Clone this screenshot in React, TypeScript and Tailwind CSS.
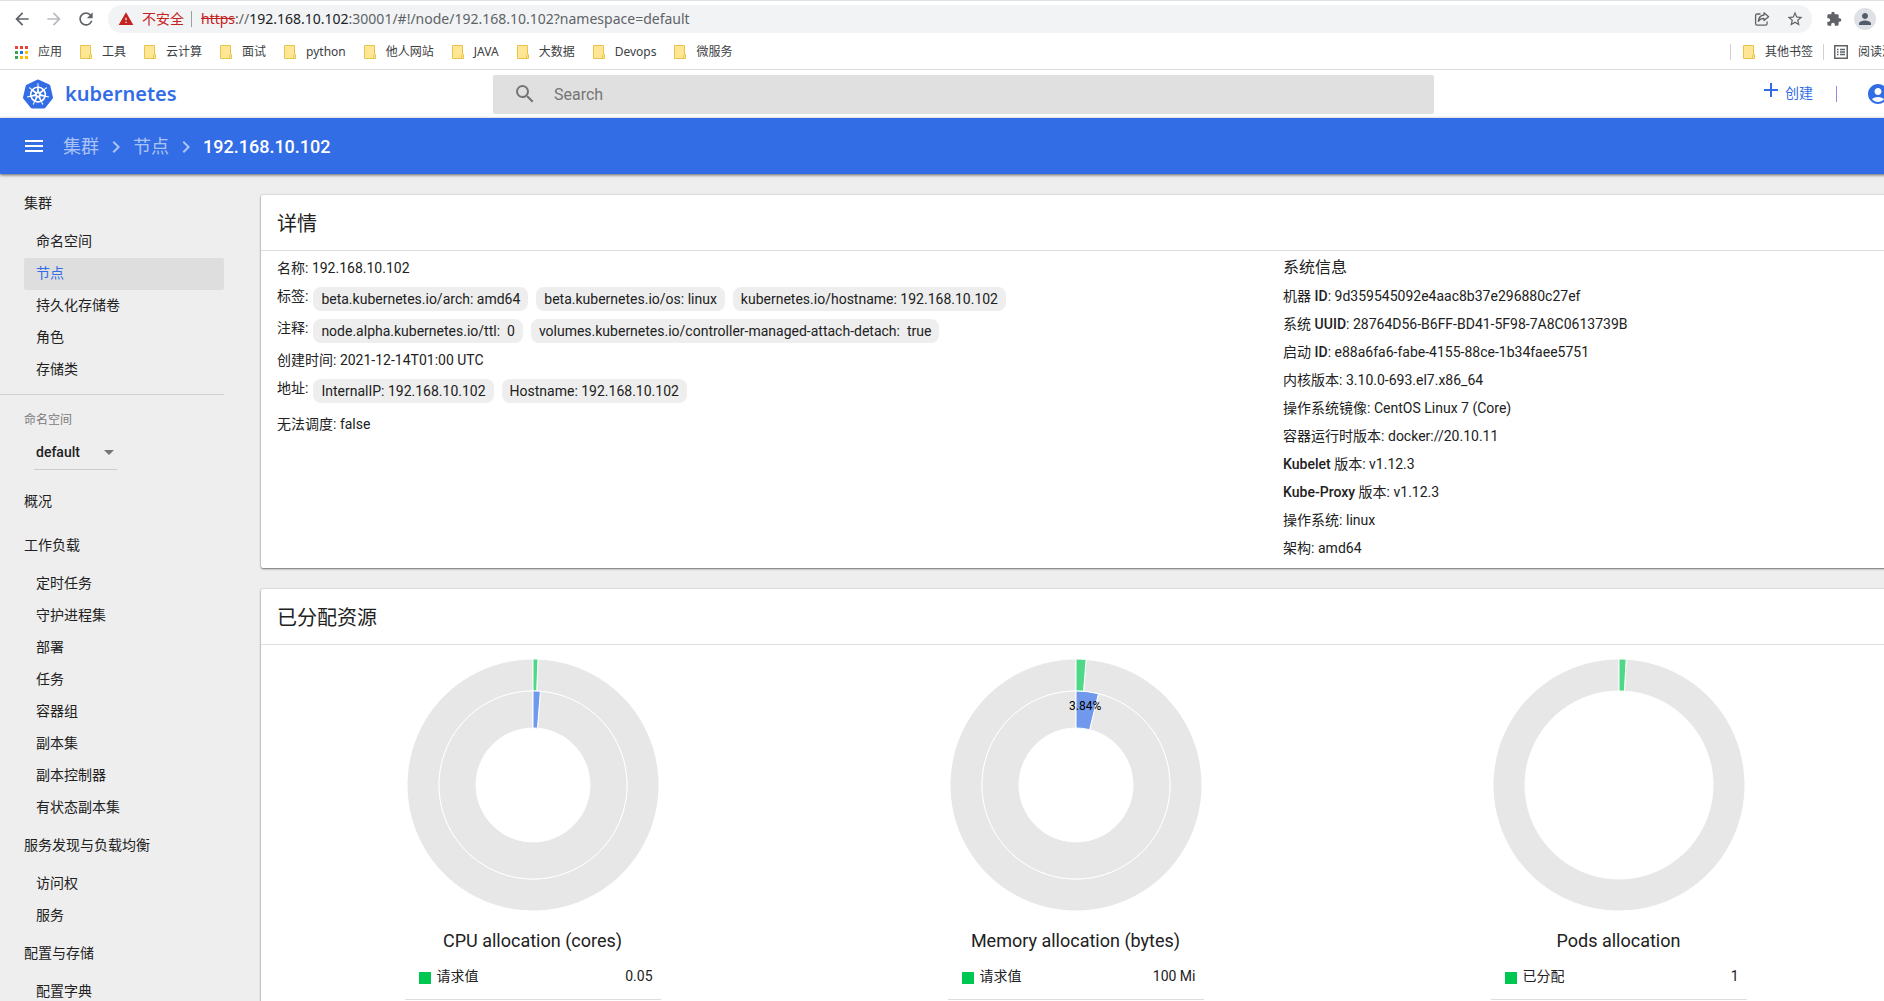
import { ReactNode, useState } from 'react';
import {
  MdAccountCircle,
  MdAdd,
  MdArrowBack,
  MdArrowDropDown,
  MdArrowForward,
  MdChevronRight,
  MdExtension,
  MdMenu,
  MdPerson,
  MdRefresh,
  MdSearch,
  MdStarBorder,
  MdWarning,
} from 'react-icons/md';
import { SiKubernetes } from 'react-icons/si';

interface NavSection {
  title: string;
  items: string[];
}

interface Slice {
  percent: number;
  color: string;
  outer: number;
  inner: number;
  label?: string;
}

interface Allocation {
  title: string;
  legend: string;
  value: string;
  slices: Slice[];
}

const BOOKMARKS = ['工具', '云计算', '面试', 'python', '他人网站', 'JAVA', '大数据', 'Devops', '微服务'];

const APP_DOTS = [
  '#ea4335', '#ea4335', '#ea4335',
  '#34a853', '#1a73e8', '#fbbc04',
  '#34a853', '#fbbc04', '#fbbc04',
];

const CLUSTER: NavSection = { title: '集群', items: ['命名空间', '节点', '持久化存储卷', '角色', '存储类'] };

const SECTIONS: NavSection[] = [
  { title: '概况', items: [] },
  { title: '工作负载', items: ['定时任务', '守护进程集', '部署', '任务', '容器组', '副本集', '副本控制器', '有状态副本集'] },
  { title: '服务发现与负载均衡', items: ['访问权', '服务'] },
  { title: '配置与存储', items: ['配置字典'] },
];

const SYSTEM_INFO = [
  ['机器 ID', '9d359545092e4aac8b37e296880c27ef'],
  ['系统 UUID', '28764D56-B6FF-BD41-5F98-7A8C0613739B'],
  ['启动 ID', 'e88a6fa6-fabe-4155-88ce-1b34faee5751'],
  ['内核版本', '3.10.0-693.el7.x86_64'],
  ['操作系统镜像', 'CentOS Linux 7 (Core)'],
  ['容器运行时版本', 'docker://20.10.11'],
  ['Kubelet 版本', 'v1.12.3'],
  ['Kube-Proxy 版本', 'v1.12.3'],
  ['操作系统', 'linux'],
  ['架构', 'amd64'],
];

const GREEN = '#4dd987';
const BLUE = '#7099ed';

const ALLOCATIONS: Allocation[] = [
  {
    title: 'CPU allocation (cores)',
    legend: '请求值',
    value: '0.05',
    slices: [
      { percent: 0.63, color: GREEN, outer: 126, inner: 94 },
      { percent: 1.25, color: BLUE, outer: 94, inner: 57 },
    ],
  },
  {
    title: 'Memory allocation (bytes)',
    legend: '请求值',
    value: '100 Mi',
    slices: [
      { percent: 1.28, color: GREEN, outer: 126, inner: 94 },
      { percent: 3.84, color: BLUE, outer: 94, inner: 57, label: '3.84%' },
    ],
  },
  {
    title: 'Pods allocation',
    legend: '已分配',
    value: '1',
    slices: [{ percent: 0.91, color: GREEN, outer: 126, inner: 94 }],
  },
];

function polar(radius: number, percent: number) {
  const angle = (percent / 100) * Math.PI * 2;
  return [radius * Math.sin(angle), -radius * Math.cos(angle)];
}

// Ring segment running clockwise between two percentages, 0 is at the top
function arc(outer: number, inner: number, from: number, to: number) {
  const [x1, y1] = polar(outer, from);
  const [x2, y2] = polar(outer, to);
  const [x3, y3] = polar(inner, to);
  const [x4, y4] = polar(inner, from);
  const large = to - from > 50 ? 1 : 0;
  return `M${x1},${y1}A${outer},${outer} 0 ${large} 1 ${x2},${y2}L${x3},${y3}A${inner},${inner} 0 ${large} 0 ${x4},${y4}Z`;
}

function labelPoint(slice: Slice) {
  return polar((slice.outer + slice.inner) / 2, slice.percent / 2);
}

function Donut({ slices }: { slices: Slice[] }) {
  return (
    <svg viewBox="-128 -128 256 256" className="block w-64 h-64" role="img">
      {slices.map((s) => (
        <g key={s.outer} stroke="#fff" strokeWidth="1">
          <path d={arc(s.outer, s.inner, s.percent, 100)} fill="#e7e7e7" />
          <path d={arc(s.outer, s.inner, 0, s.percent)} fill={s.color} />
        </g>
      ))}
      {slices.filter((s) => s.label).map((s) => (
        <text key={s.label} x={labelPoint(s)[0]} y={labelPoint(s)[1]} textAnchor="middle" className="text-[12px] fill-black">
          {s.label}
        </text>
      ))}
    </svg>
  );
}

function FolderIcon() {
  return (
    <svg viewBox="0 0 12 14" className="w-3 h-3.5 shrink-0">
      <path d="M.5.5h10v9h1v4H.5z" fill="#ffe694" stroke="#e8c54a" />
      <path d="M9.5 13.5v-3l1-1" fill="none" stroke="#e8c54a" />
    </svg>
  );
}

function ShareIcon() {
  return (
    <svg viewBox="0 0 16 16" className="w-4 h-4" fill="none" stroke="#5f6368" strokeWidth="1.3" strokeLinejoin="round">
      <path d="M6.5 3H3.2C2.2 3 1.6 3.6 1.6 4.6v8c0 1 .6 1.6 1.6 1.6h8.3c1 0 1.6-.6 1.6-1.6v-2" />
      <path d="M10 1.8l4.6 3.9L10 9.6V7.4C7.4 7.4 5.5 8.3 4.3 10.3 4.6 6.8 6.6 4.4 10 4z" />
    </svg>
  );
}

function ReadingListIcon() {
  return (
    <svg viewBox="0 0 14 14" className="w-3.5 h-3.5 shrink-0">
      <rect x=".75" y=".75" width="12.5" height="12.5" fill="none" stroke="#5f6368" strokeWidth="1.5" />
      <path d="M3 4.5h1.5M3 7h1.5M3 9.5h1.5M6 4.5h5M6 7h5M6 9.5h5" stroke="#5f6368" strokeWidth="1.4" />
    </svg>
  );
}

function BrowserChrome() {
  return (
    <div className="-mr-6 bg-white border-t border-[#dee1e6] border-b border-b-[#dadce0] font-['Noto_Sans','Noto_Sans_CJK_SC',sans-serif] text-[#3c4043]">
      <div className="flex items-center h-9 pl-3 pr-8 text-[#5f6368]">
        <button aria-label="后退" className="mr-3"><MdArrowBack className="w-5 h-5" /></button>
        <button aria-label="前进" className="mr-3 text-[#b9bbbe]"><MdArrowForward className="w-5 h-5" /></button>
        <button aria-label="刷新"><MdRefresh className="w-5 h-5" /></button>
        <div className="flex items-center flex-1 h-7 ml-3 pl-2.5 pr-2 rounded-full bg-[#f1f3f4]">
          <MdWarning className="w-4 h-4 text-[#c5221f]" />
          <span className="ml-2 text-sm leading-5 text-[#c5221f]">不安全</span>
          <span className="w-px h-4 ml-[7px] mr-[9px] bg-[#9aa0a6]" />
          <span className="text-sm leading-5">
            <span className="text-[#c5221f] line-through">https</span>://
            <span className="text-[#202124]">192.168.10.102</span>:30001/#!/node/192.168.10.102?namespace=default
          </span>
          <button aria-label="分享" className="ml-auto"><ShareIcon /></button>
          <button aria-label="收藏" className="ml-4"><MdStarBorder className="w-[18px] h-[18px]" /></button>
        </div>
        <button aria-label="扩展程序" className="ml-3.5"><MdExtension className="w-4 h-4" /></button>
        <button aria-label="用户" className="ml-3 w-[22px] h-[22px] rounded-full bg-[#dee1e6] flex items-center justify-center">
          <MdPerson className="w-[18px] h-[18px] text-[#525c6b]" />
        </button>
      </div>
      <div className="flex items-center h-8 pb-0.5 pl-[15px] pr-0.5 text-xs whitespace-nowrap">
        <a href="#apps" className="flex items-center gap-2.5 mr-[18px]">
          <span className="grid grid-cols-3 gap-0.5">
            {APP_DOTS.map((color, i) => (
              <span key={i} className="w-[3px] h-[3px]" style={{ backgroundColor: color }} />
            ))}
          </span>
          应用
        </a>
        {BOOKMARKS.map((name) => (
          <a key={name} href="#bookmark" className="flex items-center gap-2.5 mr-[18px]">
            <FolderIcon />
            {name}
          </a>
        ))}
        <div className="flex items-center ml-auto">
          <span className="w-px h-4 mr-3 bg-[#cfd1d4]" />
          <a href="#other" className="flex items-center gap-2.5"><FolderIcon />其他书签</a>
          <span className="w-px h-4 mx-2.5 bg-[#cfd1d4]" />
          <a href="#reading" className="flex items-center gap-2.5"><ReadingListIcon />阅读清单</a>
        </div>
      </div>
    </div>
  );
}

function AppHeader() {
  return (
    <header className="grid grid-cols-[493fr_941fr_470fr] items-center h-12 bg-white">
      <a href="#home" className="flex items-center gap-3 pl-[23px] text-[#326de6]">
        <SiKubernetes className="w-[30px] h-[30px]" />
        <span className="text-xl leading-6 font-semibold font-['Noto_Sans',sans-serif]">kubernetes</span>
      </a>
      <label className="flex items-center h-[39px] pl-5 bg-[#e0e0e0] rounded-xs text-[#757575]">
        <MdSearch className="w-6 h-6" />
        <input
          type="text"
          aria-label="Search"
          placeholder="Search"
          className="flex-1 ml-[17px] pt-0.5 bg-transparent text-base outline-none placeholder:text-[#757575]"
        />
      </label>
      <div className="flex items-center justify-end pr-3.5 text-[#326de6]">
        <button className="flex items-center gap-0.5 text-sm">
          <MdAdd className="w-6 h-6 mb-2" />
          <span className="pb-0.5">创建</span>
        </button>
        <span className="w-px h-4 ml-[23px] mr-[29px] bg-[#8f8bea]" />
        <button aria-label="账户"><MdAccountCircle className="w-6 h-6" /></button>
      </div>
    </header>
  );
}

function Breadcrumbs() {
  return (
    <div className="relative z-10 flex items-center h-14 pl-[22px] bg-[#326de6] text-lg text-white shadow-[0_1px_3px_rgba(0,0,0,0.6)]">
      <button aria-label="菜单"><MdMenu className="w-6 h-6" /></button>
      <nav className="flex items-center gap-[5px] ml-[17px] pt-0.5 text-white/60">
        <a href="#cluster">集群</a>
        <MdChevronRight className="w-6 h-6" />
        <a href="#nodes">节点</a>
        <MdChevronRight className="w-6 h-6" />
        <span className="font-medium text-white">192.168.10.102</span>
      </nav>
    </div>
  );
}

function NavGroup({ section, active, onSelect }: { section: NavSection; active: string; onSelect: (name: string) => void }) {
  return (
    <div>
      <a href="#section" className="flex items-center h-11 pb-0.5 pl-6">{section.title}</a>
      {section.items.map((item) => (
        <a
          key={item}
          href="#item"
          onClick={() => onSelect(item)}
          className={
            item === active
              ? 'flex items-center h-8 pb-0.5 ml-6 pl-3 rounded-xs bg-[#dedede] text-[#326de6]'
              : 'flex items-center h-8 pb-0.5 ml-6 pl-3'
          }
        >
          {item}
        </a>
      ))}
    </div>
  );
}

function Sidebar() {
  const [active, setActive] = useState('节点');

  return (
    <aside className="w-56 shrink-0 pt-2 text-sm">
      <NavGroup section={CLUSTER} active={active} onSelect={setActive} />
      <div className="mt-2 pt-[15px] pb-2.5 border-t border-[#cfcfcf]">
        <label htmlFor="namespace" className="block pl-6 text-xs leading-5 text-[#7a7a7a]">命名空间</label>
        <div className="relative w-[83px] mt-1 ml-[34px] border-b border-[#cccccc]">
          <select id="namespace" className="appearance-none w-full h-[35px] pl-0.5 font-medium bg-transparent outline-none">
            <option>default</option>
          </select>
          <MdArrowDropDown className="absolute -right-1 top-1.5 w-6 h-6 text-[#757575] pointer-events-none" />
        </div>
      </div>
      {SECTIONS.map((s) => (
        <NavGroup key={s.title} section={s} active={active} onSelect={setActive} />
      ))}
    </aside>
  );
}

function Card({ title, children }: { title: string; children: ReactNode }) {
  return (
    <section className="bg-white rounded-xs shadow-[0_1px_2px_rgba(0,0,0,0.5),0_0_2px_rgba(0,0,0,0.2)]">
      <h2 className="flex items-center h-14 pt-0.5 pl-4 text-xl border-b border-[#dddddd]">{title}</h2>
      {children}
    </section>
  );
}

function Field({ label, children }: { label: string; children: ReactNode }) {
  // Latin words in a label are set in medium, the Chinese part stays regular
  const parts = label.split(/([A-Za-z-]+)/);
  return (
    <div className="leading-7">
      <dt className="inline">
        {parts.map((part, i) => (i % 2 ? <span key={i} className="font-medium">{part}</span> : part))}:{' '}
      </dt>
      <dd className="inline">{children}</dd>
    </div>
  );
}

function ChipField({ label, chips }: { label: string; chips: string[] }) {
  return (
    <div className="flex gap-[5px] h-8">
      <dt className="leading-7">{label}:</dt>
      <dd className="flex gap-2 pt-[5px]">
        {chips.map((chip) => (
          <span key={chip} className="h-6 px-2 rounded-lg bg-[#eeeeee] leading-6 whitespace-pre">{chip}</span>
        ))}
      </dd>
    </div>
  );
}

function Details() {
  return (
    <Card title="详情">
      <div className="flex px-4 pt-[3px] pb-1.5 text-sm">
        <dl className="w-[63%]">
          <Field label="名称">192.168.10.102</Field>
          <ChipField
            label="标签"
            chips={['beta.kubernetes.io/arch: amd64', 'beta.kubernetes.io/os: linux', 'kubernetes.io/hostname: 192.168.10.102']}
          />
          <ChipField
            label="注释"
            chips={['node.alpha.kubernetes.io/ttl:  0', 'volumes.kubernetes.io/controller-managed-attach-detach:  true']}
          />
          <Field label="创建时间">2021-12-14T01:00 UTC</Field>
          <div className="mb-1">
            <ChipField label="地址" chips={['InternalIP: 192.168.10.102', 'Hostname: 192.168.10.102']} />
          </div>
          <Field label="无法调度">false</Field>
        </dl>
        <div className="flex-1">
          <h3 className="text-base leading-7">系统信息</h3>
          <dl>
            {SYSTEM_INFO.map(([label, value]) => (
              <Field key={label} label={label}>{value}</Field>
            ))}
          </dl>
        </div>
      </div>
    </Card>
  );
}

function Resources() {
  return (
    <Card title="已分配资源">
      <div className="grid grid-cols-3 pt-3 pb-8">
        {ALLOCATIONS.map((a) => (
          <div key={a.title} className="flex flex-col items-center">
            <Donut slices={a.slices} />
            <h3 className="mt-4 text-lg leading-6">{a.title}</h3>
            <dl className="flex w-64 mt-[7px] h-10 pl-3.5 pr-2 border-b border-[#dddddd] text-sm leading-8">
              <dt className="flex">
                <span className="w-3 h-3 mt-3 mr-1.5 bg-[#00c752]" />
                {a.legend}
              </dt>
              <dd className="ml-auto">{a.value}</dd>
            </dl>
          </div>
        ))}
      </div>
    </Card>
  );
}

export default function App() {
  return (
    <div className="flex flex-col h-screen overflow-hidden bg-[#eeeeee] font-['Roboto','Noto_Sans_CJK_SC',sans-serif] text-[#212121]">
      <BrowserChrome />
      <div className="flex flex-col flex-1 min-h-0 -mr-5">
        <AppHeader />
        <Breadcrumbs />
        <div className="flex flex-1 min-h-0">
          <Sidebar />
          <main className="flex flex-col flex-1 gap-[21px] pl-[37px] pr-3.5 pt-[21px]">
            <Details />
            <Resources />
          </main>
        </div>
      </div>
    </div>
  );
}
